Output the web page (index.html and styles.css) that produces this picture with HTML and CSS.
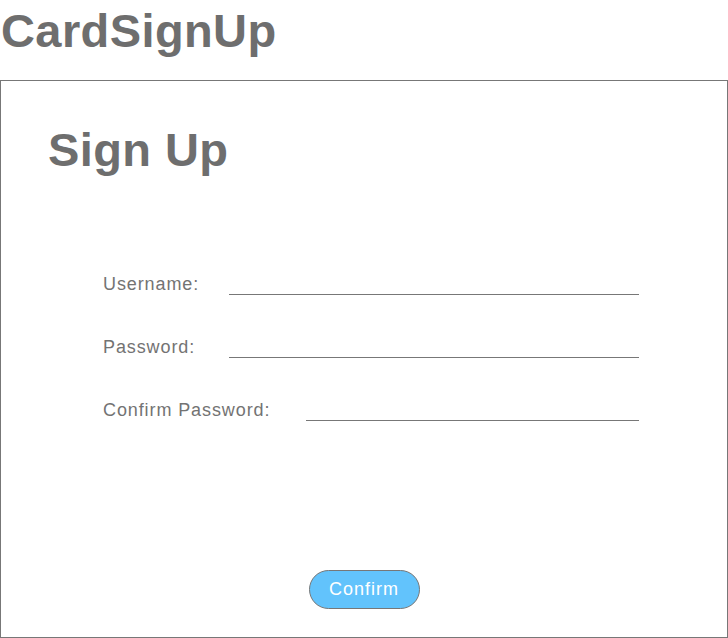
FILE: index.html
```html
<!DOCTYPE html>
<html lang="en">
<head>
<meta charset="utf-8">
<title>CardSignUp</title>
<link rel="stylesheet" href="styles.css">
</head>
<body>
<h1 class="app-title">CardSignUp</h1>
<main class="card">
  <h2 class="card-title">Sign Up</h2>
  <form class="form">
    <div class="field">
      <label class="field-label" for="username">Username:</label>
      <input class="field-input" id="username" type="text">
    </div>
    <div class="field">
      <label class="field-label" for="password">Password:</label>
      <input class="field-input" id="password" type="password">
    </div>
    <div class="field">
      <label class="field-label field-label--wide" for="confirm">Confirm Password:</label>
      <input class="field-input" id="confirm" type="password">
    </div>
  </form>
  <div class="actions">
    <button class="btn" type="button">Confirm</button>
  </div>
</main>
</body>
</html>
```
FILE: styles.css
```css
* { box-sizing: border-box; }
html, body {
  margin: 0;
  background: #ffffff;
}
body {
  font-family: "Liberation Sans", Arial, Helvetica, sans-serif;
  color: #707070;
  width: 728px;
  height: 638px;
  overflow: hidden;
}
.app-title {
  margin: 0;
  height: 80px;
  padding: 3px 0 0 1px;
  font-size: 47px;
  line-height: 56px;
  font-weight: bold;
  letter-spacing: 0.4px;
  color: #6e6e6e;
}
.card {
  height: 558px;
  border: 1px solid #777777;
  display: flex;
  flex-direction: column;
  padding: 41px 0 28px 47px;
}
.card-title {
  margin: 0;
  font-size: 47px;
  line-height: 56px;
  font-weight: bold;
  letter-spacing: 0.4px;
  color: #6e6e6e;
}
.form {
  margin: 95px 0 0 55px;
  width: 536px;
  display: flex;
  flex-direction: column;
  gap: 41px;
}
.field {
  display: flex;
  align-items: flex-end;
  height: 22px;
}
.field-label {
  flex: none;
  width: 126px;
  font-size: 18px;
  line-height: 22px;
  letter-spacing: 0.9px;
  color: #737373;
}
.field-label--wide {
  width: 203px;
}
.field-input {
  flex: 1;
  min-width: 0;
  height: 22px;
  margin: 0;
  padding: 0;
  border: none;
  border-bottom: 1px solid #777777;
  background: transparent;
  font: inherit;
  outline: none;
}
.actions {
  margin-top: auto;
  display: flex;
  justify-content: center;
  padding-right: 47px;
}
.btn {
  width: 111px;
  height: 39px;
  border: 1px solid #777777;
  border-radius: 19.5px;
  background: #62c3fc;
  color: #ffffff;
  font-family: "Liberation Sans", Arial, Helvetica, sans-serif;
  font-size: 18px;
  letter-spacing: 1px;
  padding: 0;
  cursor: pointer;
}
```
